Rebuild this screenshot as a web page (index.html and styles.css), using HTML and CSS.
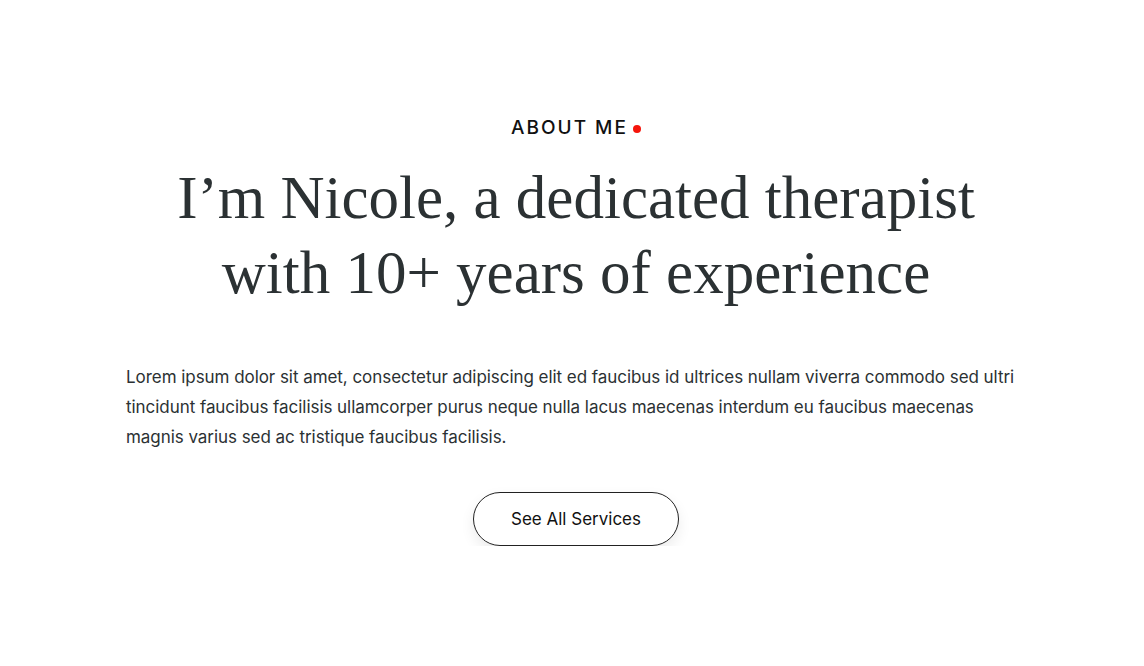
FILE: index.html
```html
<!DOCTYPE html>
<html lang="en">
<head>
<meta charset="utf-8">
<title>About Me</title>
<link rel="stylesheet" href="styles.css">
</head>
<body>
<section class="about">
  <div class="eyebrow"><span class="eyebrow-text">ABOUT ME</span><span class="dot"></span></div>
  <h1 class="title"><span class="line">I’m Nicole, a dedicated therapist</span><span class="line">with 10+ years of experience</span></h1>
  <p class="lead">Lorem ipsum dolor sit amet, consectetur adipiscing elit ed faucibus id ultrices nullam viverra commodo sed ultri tincidunt faucibus facilisis ullamcorper purus neque nulla lacus maecenas interdum eu faucibus maecenas magnis varius sed ac tristique faucibus facilisis.</p>
  <div class="actions"><a class="btn" href="#">See All Services</a></div>
</section>
</body>
</html>
```

FILE: styles.css
```css
* { box-sizing: border-box; }
html, body { margin: 0; padding: 0; background: #fff; }
body { font-family: Inter, "Noto Sans", sans-serif; color: #2b3133; }
.about {
  width: 900px;
  margin: 0 0 0 126px;
  padding-top: 114px;
  display: flex;
  flex-direction: column;
}
.eyebrow {
  display: flex;
  justify-content: center;
  align-items: center;
  gap: 5px;
  height: 26px;
}
.eyebrow-text {
  font-size: 19px;
  font-weight: 500;
  letter-spacing: 2px;
  color: #111;
}
.dot {
  width: 8px; height: 8px; border-radius: 50%;
  background: #f5150b;
  margin-top: 4px;
}
.title {
  margin: 20px 0 0;
  display: flex;
  flex-direction: column;
  align-items: center;
  font-family: "Liberation Serif", serif;
  font-weight: 400;
  font-size: 61px;
  line-height: 75px;
  color: #2b3133;
}
.line { white-space: nowrap; }
.lead {
  margin: 52px 0 0;
  font-size: 17px;
  line-height: 30px;
  letter-spacing: -0.05px;
  color: #2b3133;
}
.actions { display: flex; justify-content: center; margin-top: 40px; }
.btn {
  display: flex; align-items: center; justify-content: center;
  width: 206px; height: 54px;
  border: 1px solid #222;
  border-radius: 27px;
  font-size: 17px;
  color: #111;
  text-decoration: none;
  box-shadow: 0 6px 14px rgba(0,0,0,0.08);
}
```
